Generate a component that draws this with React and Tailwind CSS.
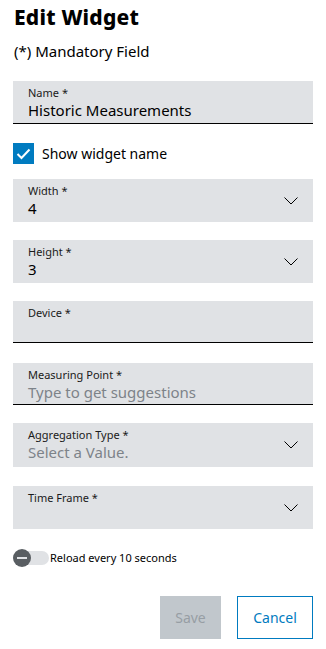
import React from "react";

const font = { fontFamily: '"Noto Sans", "Open Sans", sans-serif' };

function Chevron() {
  return (
    <svg width="14" height="8" viewBox="0 0 14 8" className="absolute right-[15px] top-[18px]">
      <path d="M0.5 0.5 L7 7 L13.5 0.5" fill="none" stroke="#000" strokeWidth="1" />
    </svg>
  );
}

function Field({ label, value, placeholder, select, underline, h = "h-[43px]" }) {
  return (
    <div
      className={`relative bg-[#e0e2e5] ${h} pl-[15px] pt-[5px] ${underline ? "border-b border-black" : ""}`}
    >
      <div className="text-[11px] leading-[14px] text-[#1a1a1a]">{label}</div>
      {value && <div className="text-[15px] leading-[20px] text-black">{value}</div>}
      {placeholder && <div className="text-[15px] leading-[20px] text-[#7d8389]">{placeholder}</div>}
      {select && <Chevron />}
    </div>
  );
}

export default function App() {
  return (
    <div className="w-[326px] h-[649px] bg-white px-[13px]" style={font}>
      <h1 className="pt-[3px] pl-[1px] text-[21px] leading-[28px] font-extrabold text-black tracking-[0.2px]">Edit Widget</h1>
      <p className="mt-[10px] pl-[1px] text-[15px] leading-[21px] text-black">(*) Mandatory Field</p>
      <div className="mt-[19px]">
        <Field label="Name *" value="Historic Measurements" underline />
      </div>
      <div className="mt-[19px] flex items-center h-[21px]">
        <div className="w-[21px] h-[21px] bg-[#007bc0] flex items-center justify-center">
          <svg width="15" height="12" viewBox="0 0 15 12">
            <path d="M1.5 6 L5.5 10 L13.5 1.5" fill="none" stroke="#fff" strokeWidth="2" />
          </svg>
        </div>
        <span className="ml-[8px] text-[14px] text-black">Show widget name</span>
      </div>
      <div className="mt-[15px] flex flex-col gap-[18px]">
        <Field label="Width *" value="4" select />
        <Field label="Height *" value="3" select />
        <Field label="Device *" underline h="h-[42px]" />
        <div className="mt-[2px]">
          <Field label="Measuring Point *" placeholder="Type to get suggestions" underline h="h-[42px]" />
        </div>
        <Field label="Aggregation Type *" placeholder="Select a Value." select h="h-[44px]" />
        <div className="mt-[1px]">
          <Field label="Time Frame *" select />
        </div>
      </div>
      <div className="mt-[19px] flex items-center h-[20px]">
        <div className="relative w-[37px] h-[16px]">
          <div className="absolute left-[6px] top-[1px] w-[30px] h-[14px] rounded-full bg-[#e0e2e5]" />
          <div className="absolute left-0 top-[-1px] w-[18px] h-[18px] rounded-full bg-[#595e62] flex items-center justify-center">
            <div className="w-[10px] h-[2px] bg-[#e0e2e5]" />
          </div>
        </div>
        <span className="text-[11px] text-black">Reload every 10 seconds</span>
      </div>
      <div className="mt-[28px] flex justify-end gap-[16px]">
        <button className="w-[61px] h-[43px] bg-[#c1c7cc] text-[#979ea4] text-[14px]">Save</button>
        <button className="w-[76px] h-[43px] border border-[#007bc0] text-[#007bc0] text-[14px] bg-white">Cancel</button>
      </div>
    </div>
  );
}
